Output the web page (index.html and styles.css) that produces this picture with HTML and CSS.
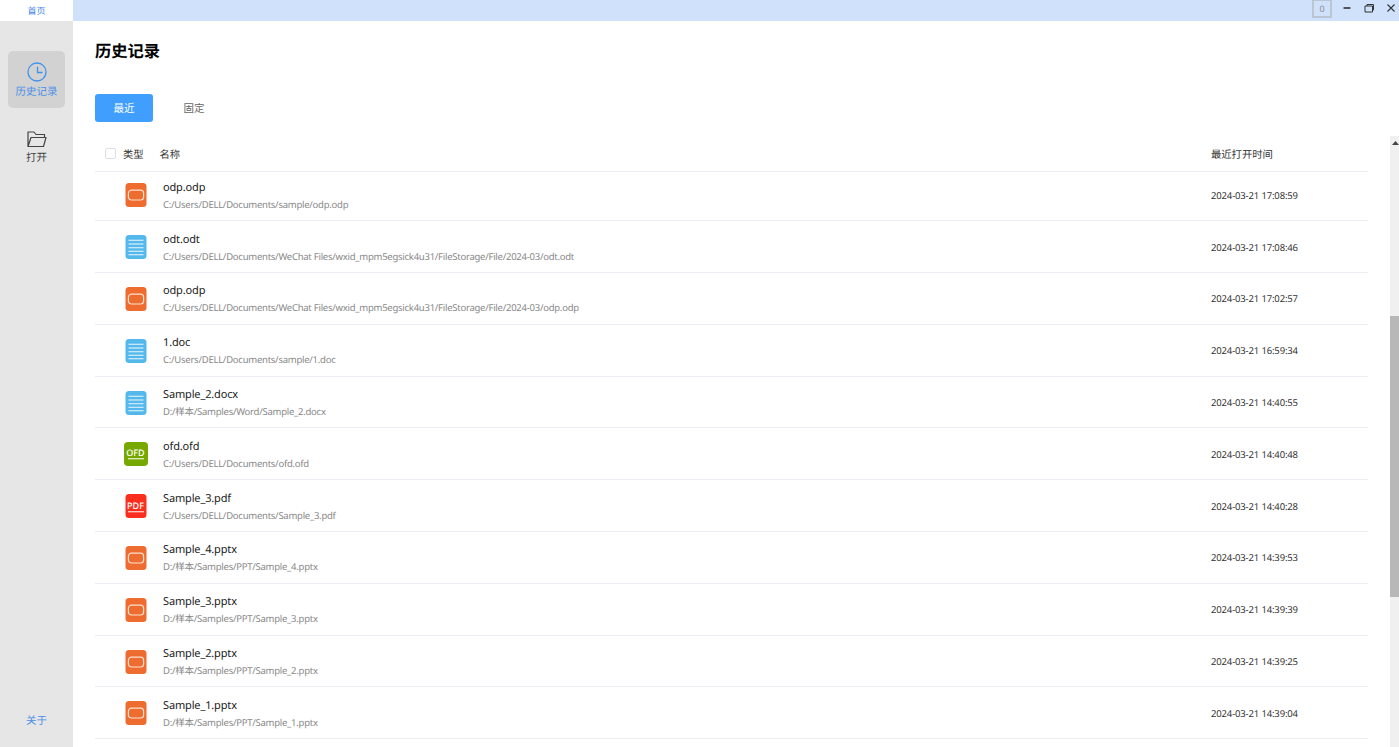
FILE: index.html
```html
<!DOCTYPE html>
<html lang="zh-CN">
<head>
<meta charset="utf-8">
<title>历史记录</title>
<link rel="stylesheet" href="styles.css">
</head>
<body>
<svg class="defs" width="0" height="0" aria-hidden="true">
  <symbol id="i-ppt" viewBox="0 0 24 24">
    <rect x="1.5" y="0" width="21" height="24" rx="3.5" fill="#ee6c2f"/>
    <rect x="4.4" y="7.2" width="15.2" height="9.8" rx="3" fill="none" stroke="#fbe0cd" stroke-width="1.2"/>
  </symbol>
  <symbol id="i-doc" viewBox="0 0 24 24">
    <rect x="1.5" y="0" width="21" height="24" rx="3.500" fill="#55b8ea"/>
    <path d="M4.500 5.300h15M4.500 9h15M4.500 12.700h15M4.500 16.300h15M4.500 19.700h15" stroke="#eaf6fd" stroke-width="1.100" fill="none"/>
  </symbol>
  <symbol id="i-ofd" viewBox="0 0 24 24">
    <rect x="0" y="0" width="24" height="24" rx="4" fill="#77a800"/>
    <rect x="4" y="16.200" width="16" height="1.100" fill="#f4f8e6"/>
  </symbol>
  <symbol id="i-pdf" viewBox="0 0 24 24">
    <rect x="1.500" y="0" width="21" height="24" rx="3.500" fill="#fb2f1f"/>
    <rect x="4" y="17.200" width="16" height="1.100" fill="#ffe9e4"/>
  </symbol>
</svg>

<header class="tabbar">
  <div class="tab">首页</div>
  <div class="win">
    <span class="badge">0</span>
    <svg class="wbtn" width="12" height="12" viewBox="0 0 12 12"><path d="M2.500 6h7" stroke="#333" stroke-width="1.600"/></svg>
    <svg class="wbtn" width="12" height="12" viewBox="0 0 12 12"><path d="M2 4h7.500v6h-7.500z M4 4v-1.500h6.500v5.500h-1" fill="none" stroke="#333" stroke-width="1"/></svg>
    <svg class="wbtn" width="12" height="12" viewBox="0 0 12 12"><path d="M2.500 2.500l7 7M9.500 2.500l-7 7" fill="none" stroke="#333" stroke-width="1.100"/></svg>
  </div>
</header>

<div class="app">
  <nav class="side">
    <div class="nav-item active">
      <svg width="20" height="20" viewBox="0 0 20 20"><circle cx="10" cy="10" r="9" fill="none" stroke="#3f91ee" stroke-width="1.300"/><path d="M10.500 4.800v5.700h5" fill="none" stroke="#3f91ee" stroke-width="1.300"/></svg>
      <span>历史记录</span>
    </div>
    <div class="nav-item">
      <svg width="20" height="17" viewBox="0 0 20 17"><path d="M1 15.500v-14.500h6l2 2.500h8.500v3M1 15.500l3-9h15l-2.500 9z" fill="none" stroke="#444" stroke-width="1.200" stroke-linejoin="round"/></svg>
      <span>打开</span>
    </div>
    <div class="about">关于</div>
  </nav>

  <main class="main">
    <h1 class="title">历史记录</h1>
    <div class="tabs">
      <button class="seg on">最近</button>
      <button class="seg">固定</button>
    </div>
    <div class="tablewrap">
      <div class="table">
        <div class="head">
          <span class="check"></span>
          <span class="h-type">类型</span>
          <span class="h-name">名称</span>
          <span class="h-time">最近打开时间</span>
        </div>
        <div class="rows">
          <div class="row"><svg class="ficon"><use href="#i-ppt"/></svg><div class="info"><div class="name">odp.odp</div><div class="path">C:/Users/DELL/Documents/sample/odp.odp</div></div><div class="time">2024-03-21 17:08:59</div></div>
          <div class="row"><svg class="ficon"><use href="#i-doc"/></svg><div class="info"><div class="name">odt.odt</div><div class="path">C:/Users/DELL/Documents/WeChat Files/wxid_mpm5egsick4u31/FileStorage/File/2024-03/odt.odt</div></div><div class="time">2024-03-21 17:08:46</div></div>
          <div class="row"><svg class="ficon"><use href="#i-ppt"/></svg><div class="info"><div class="name">odp.odp</div><div class="path">C:/Users/DELL/Documents/WeChat Files/wxid_mpm5egsick4u31/FileStorage/File/2024-03/odp.odp</div></div><div class="time">2024-03-21 17:02:57</div></div>
          <div class="row"><svg class="ficon"><use href="#i-doc"/></svg><div class="info"><div class="name">1.doc</div><div class="path">C:/Users/DELL/Documents/sample/1.doc</div></div><div class="time">2024-03-21 16:59:34</div></div>
          <div class="row"><svg class="ficon"><use href="#i-doc"/></svg><div class="info"><div class="name">Sample_2.docx</div><div class="path">D:/样本/Samples/Word/Sample_2.docx</div></div><div class="time">2024-03-21 14:40:55</div></div>
          <div class="row"><div class="ficon-wrap"><svg class="ficon"><use href="#i-ofd"/></svg><span class="ftext">OFD</span></div><div class="info"><div class="name">ofd.ofd</div><div class="path">C:/Users/DELL/Documents/ofd.ofd</div></div><div class="time">2024-03-21 14:40:48</div></div>
          <div class="row"><div class="ficon-wrap"><svg class="ficon"><use href="#i-pdf"/></svg><span class="ftext low">PDF</span></div><div class="info"><div class="name">Sample_3.pdf</div><div class="path">C:/Users/DELL/Documents/Sample_3.pdf</div></div><div class="time">2024-03-21 14:40:28</div></div>
          <div class="row"><svg class="ficon"><use href="#i-ppt"/></svg><div class="info"><div class="name">Sample_4.pptx</div><div class="path">D:/样本/Samples/PPT/Sample_4.pptx</div></div><div class="time">2024-03-21 14:39:53</div></div>
          <div class="row"><svg class="ficon"><use href="#i-ppt"/></svg><div class="info"><div class="name">Sample_3.pptx</div><div class="path">D:/样本/Samples/PPT/Sample_3.pptx</div></div><div class="time">2024-03-21 14:39:39</div></div>
          <div class="row"><svg class="ficon"><use href="#i-ppt"/></svg><div class="info"><div class="name">Sample_2.pptx</div><div class="path">D:/样本/Samples/PPT/Sample_2.pptx</div></div><div class="time">2024-03-21 14:39:25</div></div>
          <div class="row"><svg class="ficon"><use href="#i-ppt"/></svg><div class="info"><div class="name">Sample_1.pptx</div><div class="path">D:/样本/Samples/PPT/Sample_1.pptx</div></div><div class="time">2024-03-21 14:39:04</div></div>
        </div>
      </div>
      <div class="scroll">
        <svg class="arrow" width="7" height="4" viewBox="0 0 7 4"><path d="M3.500 0l3.500 4h-7z" fill="#444"/></svg>
        <div class="thumb"></div>
      </div>
    </div>
  </main>
</div>
</body>
</html>
```

FILE: styles.css
```css
* { box-sizing: border-box; }
html, body { margin: 0; height: 100%; overflow: hidden; }
body {
  font-family: "Noto Sans", "Noto Sans CJK SC", sans-serif;
  text-rendering: geometricPrecision;
  background: #fff;
  color: #222;
  display: flex;
  flex-direction: column;
}
.defs { display: block; height: 0; }

.tabbar {
  height: 21px;
  flex: none;
  background: #d0e1fb;
  display: flex;
  justify-content: space-between;
}
.tab {
  width: 73px;
  background: #fff;
  color: #3f86e8;
  font-size: 9px;
  line-height: 21px;
  text-align: center;
}
.win { display: flex; align-items: flex-start; }
.badge {
  width: 20px;
  height: 18px;
  border: 2px solid #bcc6d2;
  border-top-width: 1px;
  font-size: 9px;
  line-height: 15px;
  text-align: center;
  color: #8a8f96;
  margin-right: 4px;
}
.wbtn { margin: 2px 5px 0; }
.wbtn:last-child { margin-right: 2px; }

.app { flex: 1; display: flex; min-height: 0; }

.side {
  width: 73px;
  flex: none;
  background: #e6e6e6;
  padding: 30px 8px 19px;
  display: flex;
  flex-direction: column;
  align-items: center;
}
.nav-item {
  width: 57px;
  height: 57px;
  border-radius: 5px;
  display: flex;
  flex-direction: column;
  align-items: center;
  justify-content: center;
  gap: 3px;
  font-size: 10.500px;
  line-height: 14px;
  color: #444;
}
.nav-item + .nav-item { margin-top: 11px; }
.nav-item.active { background: #d2d2d2; color: #4a90e8; padding-top: 2px; }
.about {
  margin-top: auto;
  color: #4a90e8;
  font-size: 10.500px;
  line-height: 14px;
}

.main { flex: 1; min-width: 0; display: flex; flex-direction: column; padding-left: 22px; }
.title {
  margin: 17px 0 0;
  font-size: 16.300px;
  line-height: 26px;
  font-weight: 700;
  color: #000;
}
.tabs { display: flex; margin-top: 30px; }
.seg {
  font: inherit;
  width: 58px;
  height: 28px;
  border: 0;
  border-radius: 3px;
  font-size: 10.500px;
  background: transparent;
  color: #666;
  padding: 0 0 2px;
  margin-right: 12px;
}
.seg.on { background: #409eff; color: #fff; }

.tablewrap { flex: 1; display: flex; margin-top: 14px; min-height: 0; }
.table { flex: 1; min-width: 0; overflow: hidden; padding-right: 22px; }
.head {
  height: 36px;
  display: flex;
  align-items: center;
  background: #fff;
  border-bottom: 1px solid #ebeef5;
  position: relative;
  z-index: 1;
  font-size: 10.300px;
  color: #333;
}
.check {
  width: 11px;
  height: 11px;
  border: 1px solid #dcdfe6;
  border-radius: 2px;
  margin-left: 10px;
}
.h-type { margin-left: 7px; width: 36.500px; }
.h-name { flex: 1; }
.h-time { width: 157px; }

.rows { margin-top: -2.500px; }
.row {
  height: 51.800px;
  padding-top: 1px;
  display: flex;
  align-items: center;
  border-bottom: 1px solid #ebeef5;
}
.ficon, .ficon-wrap { width: 24px; height: 24px; flex: none; margin-left: 28.500px; display: block; }
.ficon-wrap { position: relative; }
.ficon-wrap .ficon { margin-left: 0; }
.ftext {
  position: absolute;
  left: 0;
  right: 0;
  top: 5px;
  text-align: center;
  color: #fff;
  font-size: 9px;
  line-height: 12px;
  font-weight: 500;
}
.ftext.low { top: 5.500px; }
.info { flex: 1; min-width: 0; margin-left: 15.500px; padding-top: 1px; }
.name { font-size: 11px; line-height: 16px; color: #222; letter-spacing: -0.15px; }
.path { font-size: 9.500px; line-height: 14px; color: #888; margin-top: 2px; letter-spacing: -0.25px; }
.time { width: 157px; font-size: 9.500px; color: #333; letter-spacing: -0.15px; }

.scroll {
  width: 9px;
  flex: none;
  background: #f0f0f0;
  position: relative;
  height: 100%;
}
.arrow { position: absolute; left: 2px; top: 5px; }
.thumb { position: absolute; left: 0; right: 0; top: 180px; height: 281px; background: #b8b8b8; }
```
